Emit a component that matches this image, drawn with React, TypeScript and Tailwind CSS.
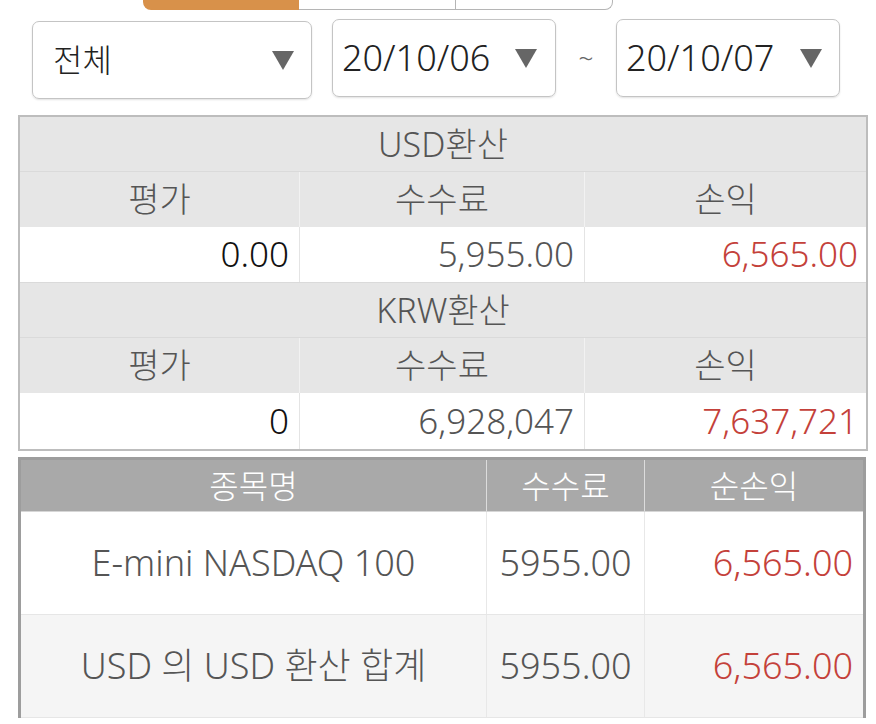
import React from 'react';

const FONT = { fontFamily: '"Noto Sans", "Noto Sans CJK KR", sans-serif' };

const Caret = () => (
  <svg width="22" height="19" viewBox="0 0 22 19" className="shrink-0">
    <polygon points="0,0 22,0 11,19" fill="#666666" />
  </svg>
);

interface SummaryProps {
  title: string;
  values: [string, string, string];
  last?: boolean;
}

const SummaryBlock: React.FC<SummaryProps> = ({ title, values, last }) => (
  <>
    <div className="h-[55px] bg-[#e6e6e6] border-b border-[#dadada] flex items-center justify-center text-[#555] text-[34px]">
      {title}
    </div>
    <div className="h-[55px] bg-[#e6e6e6] grid grid-cols-[280px_285px_1fr] text-[#555] text-[34px]">
      <div className="flex items-center justify-center border-r border-[#f2f2f2]">평가</div>
      <div className="flex items-center justify-center border-r border-[#f2f2f2]">수수료</div>
      <div className="flex items-center justify-center">손익</div>
    </div>
    <div
      className={`h-[56px] bg-white grid grid-cols-[280px_285px_1fr] text-[35px] ${last ? '' : 'border-b border-[#dadada]'}`}
    >
      <div className="flex items-center justify-end pr-[10px] border-r border-[#e4e4e4] text-[#111]">
        {values[0]}
      </div>
      <div className="flex items-center justify-end pr-[10px] border-r border-[#e4e4e4] text-[#555]">
        {values[1]}
      </div>
      <div className="flex items-center justify-end pr-[8px] text-[#c4413a]">{values[2]}</div>
    </div>
  </>
);

const rows = [
  { name: 'E-mini NASDAQ 100', fee: '5955.00', pnl: '6,565.00', bg: 'bg-white' },
  { name: 'USD 의 USD 환산 합계', fee: '5955.00', pnl: '6,565.00', bg: 'bg-[#f5f5f5]' },
];

export default function App() {
  return (
    <div className="w-[876px] h-[724px] overflow-hidden bg-white font-light" style={FONT}>
      {/* tabs (cut off at top) */}
      <div className="flex h-[10px] ml-[143px]">
        <div className="w-[156px] bg-[#d8914a] rounded-bl-[8px]" />
        <div className="w-[157px] border-b border-[#b5b5b5] border-r" />
        <div className="w-[157px] border-b border-r border-[#b5b5b5] rounded-br-[8px]" />
      </div>

      {/* filters */}
      <div className="flex items-start pl-[32px] mt-[9px]">
        <div className="w-[280px] h-[78px] mt-[2px] rounded-[7px] border border-[#c4c4c4] shadow-[0_1px_2px_rgba(0,0,0,0.12)] flex items-center justify-between pl-[20px] pr-[17px] text-[32px] text-[#222]">
          <span>전체</span>
          <Caret />
        </div>
        <div className="w-[224px] h-[78px] ml-[20px] rounded-[7px] border border-[#c4c4c4] shadow-[0_1px_2px_rgba(0,0,0,0.12)] flex items-center justify-between pl-[9px] pr-[18px] text-[36px] text-[#222]">
          <span>20/10/06</span>
          <Caret />
        </div>
        <div className="w-[60px] h-[78px] flex items-center justify-center text-[26px] text-[#666]">~</div>
        <div className="w-[224px] h-[78px] rounded-[7px] border border-[#c4c4c4] shadow-[0_1px_2px_rgba(0,0,0,0.12)] flex items-center justify-between pl-[9px] pr-[17px] text-[36px] text-[#222]">
          <span>20/10/07</span>
          <Caret />
        </div>
      </div>

      {/* summary */}
      <div className="ml-[18px] mt-[16px] w-[850px] border-2 border-[#bdbdbd] flex flex-col">
        <SummaryBlock title="USD환산" values={['0.00', '5,955.00', '6,565.00']} />
        <SummaryBlock title="KRW환산" values={['0', '6,928,047', '7,637,721']} last />
      </div>

      {/* detail list */}
      <div className="ml-[18px] mt-[6px] w-[848px] border-[3px] border-b-0 border-[#9d9d9d]">
        <div className="h-[52px] bg-[#a9a9a9] grid grid-cols-[466px_158px_1fr] text-white text-[32px] border-b border-[#d6d6d6]">
          <div className="flex items-center justify-center border-r border-[#dcdcdc]">종목명</div>
          <div className="flex items-center justify-center border-r border-[#dcdcdc]">수수료</div>
          <div className="flex items-center justify-center">순손익</div>
        </div>
        {rows.map((r) => (
          <div
            key={r.name}
            className={`h-[103px] ${r.bg} grid grid-cols-[466px_158px_1fr] text-[36px] border-b border-[#e6e6e6]`}
          >
            <div className="flex items-center justify-center border-r border-[#e8e8e8] text-[#555]">{r.name}</div>
            <div className="flex items-center justify-center border-r border-[#e8e8e8] text-[#555]">{r.fee}</div>
            <div className="flex items-center justify-end pr-[10px] text-[#c4413a]">{r.pnl}</div>
          </div>
        ))}
      </div>
    </div>
  );
}
